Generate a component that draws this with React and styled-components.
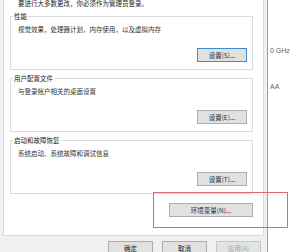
import React from "react";
import styled, { createGlobalStyle } from "styled-components";

const Global = createGlobalStyle`
  html, body {
    margin: 0;
    padding: 0;
    width: 300px;
    height: 252px;
    overflow: hidden;
    background: #ffffff;
  }
  body {
    font-family: "Noto Sans CJK SC", "Noto Sans", sans-serif;
  }
`;

const Screen = styled.div`
  position: relative;
  display: flex;
  width: 300px;
  height: 252px;
  overflow: hidden;
`;

const Dialog = styled.div`
  flex: 0 0 268px;
  box-sizing: border-box;
  background: #f0f0f0;
  border-right: 1px solid #9c9c9c;
  padding-left: 3px;
  display: flex;
  flex-direction: column;
`;

const TabPage = styled.div`
  width: 261px;
  box-sizing: border-box;
  margin-top: -1px;
  background: #ffffff;
  border: 1px solid #d9d9d9;
  border-top: none;
  padding: 0 9px 18px 6px;
  display: flex;
  flex-direction: column;
`;

const Notice = styled.div`
  font-size: 6.5px;
  line-height: 9px;
  color: #222;
  padding-left: 8px;
  white-space: nowrap;
`;

const Group = styled.fieldset`
  width: 243px;
  box-sizing: border-box;
  margin: 4px 0 0;
  padding: 0 5px 7px 7px;
  border: 1px solid #dcdcdc;
  min-width: 0;
`;

const Legend = styled.legend`
  margin-left: -5px;
  padding: 0 1px;
  font-size: 6.5px;
  line-height: 9px;
  color: #222;
  white-space: nowrap;
`;

const Desc = styled.div`
  margin-top: 4px;
  font-size: 6.5px;
  line-height: 9px;
  color: #333;
  white-space: nowrap;
`;

const Row = styled.div`
  display: flex;
  justify-content: flex-end;
  gap: ${(p) => p.$gap || 0}px;
  margin-top: ${(p) => p.$top || 0}px;
  padding-right: ${(p) => p.$right || 0}px;
`;

const Button = styled.div`
  width: ${(p) => p.$w}px;
  height: 14px;
  box-sizing: border-box;
  display: flex;
  align-items: center;
  justify-content: center;
  font-size: 6.5px;
  line-height: 9px;
  white-space: nowrap;
  background: ${(p) => (p.$disabled ? "#e3e3e3" : "#e1e1e1")};
  border: 1px solid
    ${(p) => (p.$focus ? "#3d8bd0" : p.$disabled ? "#c6c6c6" : "#adadad")};
  color: ${(p) => (p.$disabled ? "#a3a3a3" : "#222")};
`;

const BgWindow = styled.div`
  flex: 1;
  background: #ffffff;
  display: flex;
  flex-direction: column;
  padding-left: 2px;
  font-family: "Liberation Sans", Arial, sans-serif;
  font-size: 7px;
  line-height: 9px;
  color: #666;
  white-space: nowrap;
`;

const BgLine = styled.div`
  margin-top: ${(p) => p.$top}px;
`;

const Highlight = styled.div`
  position: absolute;
  left: 153px;
  top: 192px;
  width: 135px;
  height: 36px;
  box-sizing: border-box;
  border: 1.5px solid #e06670;
  pointer-events: none;
`;

export default function App() {
  const groups = [
    { title: "性能", desc: "视觉效果，处理器计划，内存使用，以及虚拟内存", btn: "设置(S)...", focus: true },
    { title: "用户配置文件", desc: "与登录帐户相关的桌面设置", btn: "设置(E)..." },
    { title: "启动和故障恢复", desc: "系统启动、系统故障和调试信息", btn: "设置(T)..." },
  ];
  return (
    <>
      <Global />
      <Screen>
        <Dialog>
          <TabPage>
            <Notice>要进行大多数更改，你必须作为管理员登录。</Notice>
            {groups.map((g) => (
              <Group key={g.title}>
                <Legend>{g.title}</Legend>
                <Desc>{g.desc}</Desc>
                <Row $top={14}>
                  <Button $w={50} $focus={g.focus}>{g.btn}</Button>
                </Row>
              </Group>
            ))}
            <Row $top={9} $right={1}>
              <Button $w={84}>环境变量(N)...</Button>
            </Row>
          </TabPage>
          <Row $top={5} $gap={9} $right={6}>
            <Button $w={45}>确定</Button>
            <Button $w={45}>取消</Button>
            <Button $w={45} $disabled>应用(A)</Button>
          </Row>
        </Dialog>
        <BgWindow>
          <BgLine $top={46}>0 GHz</BgLine>
          <BgLine $top={27}>AA</BgLine>
        </BgWindow>
        <Highlight />
      </Screen>
    </>
  );
}
